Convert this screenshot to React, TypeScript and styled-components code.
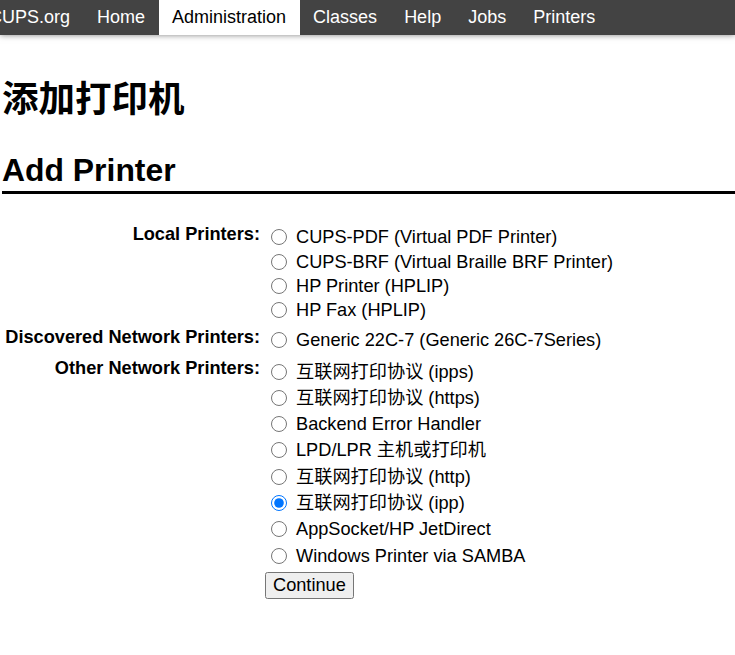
import React from "react";
import styled, { createGlobalStyle } from "styled-components";

const Global = createGlobalStyle`
  html, body { margin: 0; padding: 0; background: #fff; }
  body {
    font-family: "Liberation Sans", "Noto Sans CJK SC", sans-serif;
    color: #000;
    overflow: hidden;
  }
`;

const Header = styled.header`
  height: 35px;
  background: #434343;
  box-shadow: 0 0 6px rgba(0, 0, 0, 0.5);
  overflow: hidden;
  position: relative;
  z-index: 1;
`;

const NavList = styled.ul`
  display: flex;
  list-style: none;
  margin: 0 0 0 -24.5px;
  padding: 0;
`;

const NavItem = styled.li<{ $active?: boolean }>`
  height: 35px;
  line-height: 35px;
  padding: 0 13.5px;
  font-size: 18px;
  white-space: nowrap;
  color: ${(p) => (p.$active ? "#000" : "#fff")};
  background: ${(p) => (p.$active ? "#fff" : "transparent")};
`;

const Content = styled.main`
  padding: 0 0 0 2px;
`;

const Title = styled.h1`
  margin: 43px 0 0;
  font-size: 36.5px;
  line-height: 44px;
  font-weight: bold;
`;

const SubTitle = styled.h2`
  margin: 29.5px 0 0;
  font-size: 31.9px;
  line-height: 36px;
  font-weight: bold;
  padding-bottom: 3px;
  border-bottom: 3px solid #000;
`;

const Form = styled.form`
  display: grid;
  grid-template-columns: 258px auto;
  column-gap: 5px;
  margin-top: 31.8px;
  font-size: 18.2px;
`;

const GroupLabel = styled.div<{ $top: number }>`
  margin-top: ${(p) => p.$top}px;
  text-align: right;
  font-weight: bold;
  line-height: 18px;
  white-space: nowrap;
`;

const Options = styled.div<{ $top: number }>`
  margin-top: ${(p) => p.$top}px;
  display: flex;
  flex-direction: column;
`;

const Option = styled.label<{ $h: number }>`
  display: flex;
  align-items: center;
  height: ${(p) => p.$h}px;
  line-height: 20px;
  white-space: nowrap;
`;

const Radio = styled.input`
  width: 16px;
  height: 16px;
  margin: 0 9px 0 6px;
`;

const ButtonCell = styled.div`
  grid-column: 2;
  margin-top: 3.2px;
`;

const Button = styled.button`
  font-family: "Liberation Sans", sans-serif;
  font-size: 18.2px;
  margin: 0;
`;

type Group = { label: string; top: number; h: number; items: string[] };

const groups: Group[] = [
  {
    label: "Local Printers:",
    top: 0,
    h: 24.33,
    items: [
      "CUPS-PDF (Virtual PDF Printer)",
      "CUPS-BRF (Virtual Braille BRF Printer)",
      "HP Printer (HPLIP)",
      "HP Fax (HPLIP)",
    ],
  },
  {
    label: "Discovered Network Printers:",
    top: 5.7,
    h: 24.33,
    items: ["Generic 22C-7 (Generic 26C-7Series)"],
  },
  {
    label: "Other Network Printers:",
    top: 5.9,
    h: 26.27,
    items: [
      "互联网打印协议 (ipps)",
      "互联网打印协议 (https)",
      "Backend Error Handler",
      "LPD/LPR 主机或打印机",
      "互联网打印协议 (http)",
      "互联网打印协议 (ipp)",
      "AppSocket/HP JetDirect",
      "Windows Printer via SAMBA",
    ],
  },
];

const nav = ["CUPS.org", "Home", "Administration", "Classes", "Help", "Jobs", "Printers"];

export default function App() {
  return (
    <>
      <Global />
      <Header>
        <NavList>
          {nav.map((n) => (
            <NavItem key={n} $active={n === "Administration"}>
              {n}
            </NavItem>
          ))}
        </NavList>
      </Header>
      <Content>
        <Title>添加打印机</Title>
        <SubTitle>Add Printer</SubTitle>
        <Form onSubmit={(e) => e.preventDefault()}>
          {groups.map((g) => (
            <React.Fragment key={g.label}>
              <GroupLabel $top={g.top}>{g.label}</GroupLabel>
              <Options $top={g.top}>
                {g.items.map((it) => (
                  <Option key={it} $h={g.h}>
                    <Radio
                      type="radio"
                      name="device"
                      defaultChecked={it === "互联网打印协议 (ipp)"}
                    />
                    {it}
                  </Option>
                ))}
              </Options>
            </React.Fragment>
          ))}
          <ButtonCell>
            <Button type="submit">Continue</Button>
          </ButtonCell>
        </Form>
      </Content>
    </>
  );
}
